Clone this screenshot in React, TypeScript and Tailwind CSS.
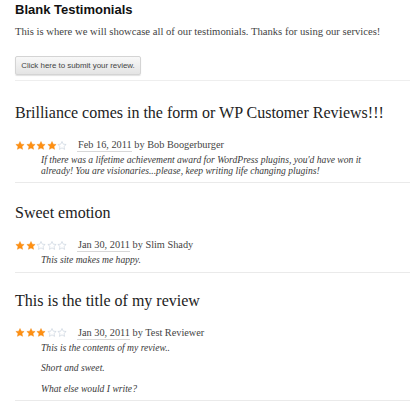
import React from "react";

const serif = { fontFamily: '"Liberation Serif", "Times New Roman", serif' };

function Star({ filled }: { filled: boolean }) {
  return (
    <svg width="10" height="9" viewBox="0 0 24 23" className="block">
      <path
        d="M12 1.2l3.2 6.9 7.4.8-5.5 5.1 1.5 7.4L12 17.6l-6.6 3.8 1.5-7.4L1.4 8.9l7.4-.8z"
        fill={filled ? "#ff9012" : "none"}
        stroke={filled ? "#f08000" : "#c5cfdc"}
        strokeWidth={filled ? 1 : 1.6}
        strokeLinejoin="round"
      />
    </svg>
  );
}

function Stars({ n }: { n: number }) {
  return (
    <div className="flex gap-[0.5px]">
      {[0, 1, 2, 3, 4].map((i) => (
        <Star key={i} filled={i < n} />
      ))}
    </div>
  );
}

type Review = {
  title: string;
  rating: number;
  date: string;
  author: string;
  paras: string[][];
  top: string;
};

const reviews: Review[] = [
  {
    title: "Brilliance comes in the form or WP Customer Reviews!!!",
    rating: 4,
    date: "Feb 16, 2011",
    author: "Bob Boogerburger",
    top: "mt-[22px]",
    paras: [
      [
        "If there was a lifetime achievement award for WordPress plugins, you'd have won it",
        "already! You are visionaries...please, keep writing life changing plugins!",
      ],
    ],
  },
  {
    title: "Sweet emotion",
    rating: 2,
    date: "Jan 30, 2011",
    author: "Slim Shady",
    top: "mt-[20px]",
    paras: [["This site makes me happy."]],
  },
  {
    title: "This is the title of my review",
    rating: 3,
    date: "Jan 30, 2011",
    author: "Test Reviewer",
    top: "mt-[18px]",
    paras: [["This is the contents of my review.."], ["Short and sweet."], ["What else would I write?"]],
  },
];

function ReviewBlock({ r }: { r: Review }) {
  return (
    <div>
      <h2 className={`${r.top} text-[16px] leading-[20px] text-[#222] font-normal`} style={serif}>
        {r.title}
      </h2>
      <div className="mt-[15px] flex items-center h-[14px]">
        <Stars n={r.rating} />
        <div className="ml-[10px] text-[10.3px] leading-[14px] text-[#444]" style={serif}>
          <span className="border-b border-[#d8d8d8] pb-[1px] pl-[1px]">{r.date}</span> by {r.author}
        </div>
      </div>
      <div className="mt-[3px] pl-[26px] text-[#3a3a3a] italic text-[9.6px] leading-[10.5px]" style={serif}>
        {r.paras.map((p, i) => (
          <p key={i} className={i > 0 ? "mt-[10px]" : ""}>
            {p.map((line, j) => (
              <span key={j} className="block">
                {line}
              </span>
            ))}
          </p>
        ))}
      </div>
      <div className="mt-[6px] border-t border-[#eaeaea]" />
    </div>
  );
}

export default function App() {
  return (
    <div className="w-[410px] h-[406px] bg-white overflow-hidden pl-[15px] pt-[2px]">
      <h1
        className="text-[13px] font-bold leading-[16px] text-[#111]"
        style={{ fontFamily: '"Liberation Sans", Arial, sans-serif' }}
      >
        Blank Testimonials
      </h1>
      <p className="mt-[7px] text-[10.65px] leading-[13px] text-[#444]" style={serif}>
        This is where we will showcase all of our testimonials. Thanks for using our services!
      </p>
      <button
        className="mt-[18px] h-[19px] w-[126px] rounded-[2px] border border-[#d4d4d4] bg-gradient-to-b from-[#f8f8f8] to-[#e4e4e4] shadow-[0_1px_1px_rgba(0,0,0,0.12)] text-[7.9px] text-[#444] flex items-center justify-center"
        style={{ fontFamily: '"Liberation Sans", Arial, sans-serif' }}
      >
        Click here to submit your review.
      </button>
      <div className="mt-[5px] border-t border-[#eeeeee]" />
      {reviews.map((r, i) => (
        <ReviewBlock key={i} r={r} />
      ))}
    </div>
  );
}
